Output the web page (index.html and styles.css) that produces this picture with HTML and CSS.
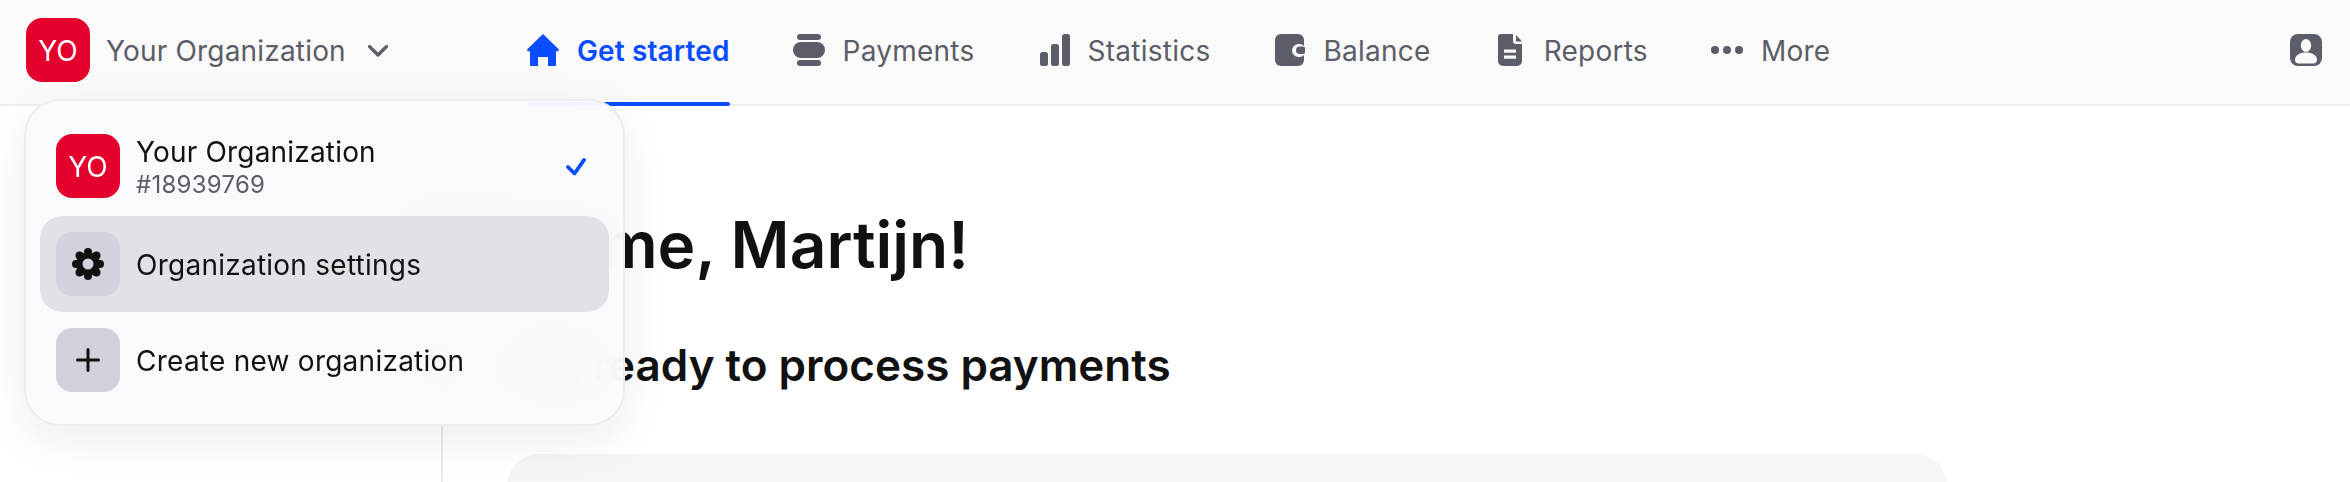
FILE: index.html
```html
<!DOCTYPE html>
<html lang="en">
<head>
<meta charset="utf-8">
<title>Get started</title>
<link rel="stylesheet" href="styles.css">
</head>
<body>
<header class="topbar">
  <div class="org">
    <span class="logo">YO</span>
    <span class="org-name">Your Organization</span>
    <svg class="chevron" width="20" height="12" viewBox="0 0 20 12"><path d="M1.6 1.6 10 10 18.4 1.6" fill="none" stroke="#5b5d68" stroke-width="3.4" stroke-linecap="round" stroke-linejoin="round"/></svg>
  </div>
  <nav class="nav">
    <a class="nav-item active">
      <svg class="icon" viewBox="0 0 32 32"><path fill-rule="evenodd" fill="#0a4cff" d="M16 0 31.4 15c.9.9.3 2.3-.9 2.3H29V31a1 1 0 0 1-1 1H21V23h-10v9H4a1 1 0 0 1-1-1V17.3H1.500c-1.200 0-1.800-1.400-.9-2.300Z"/></svg>
      <span class="label">Get started</span>
    </a>
    <a class="nav-item">
      <svg class="icon" viewBox="0 0 32 32" fill="#5b5d68"><rect x="4" y="0" width="24" height="6" rx="3"/><rect x="0" y="8" width="32" height="16" rx="8"/><rect x="4" y="26" width="24" height="6" rx="3"/></svg>
      <span class="label">Payments</span>
    </a>
    <a class="nav-item">
      <svg class="icon" viewBox="0 0 32 32" fill="#5b5d68"><rect x="2" y="18" width="8" height="14" rx="2.500"/><rect x="13" y="10" width="8" height="22" rx="2.500"/><rect x="24" y="0" width="8" height="32" rx="2.500"/></svg>
      <span class="label">Statistics</span>
    </a>
    <a class="nav-item">
      <svg class="icon" viewBox="0 0 32 32"><rect x="2" y="0" width="29" height="32" rx="6" fill="#5b5d68"/><rect x="19" y="10" width="14" height="13" rx="6.500" fill="#fafafa"/><rect x="23" y="12.500" width="10" height="7.500" rx="3.750" fill="#5b5d68"/></svg>
      <span class="label">Balance</span>
    </a>
    <a class="nav-item">
      <svg class="icon" viewBox="0 0 32 32"><path fill="#5b5d68" d="M7 0H19V7a3 3 0 0 0 3 3H28V27a5 5 0 0 1-5 5H9a5 5 0 0 1-5-5V3a3 3 0 0 1 3-3Z"/><path fill="#5b5d68" d="M22 1 28 7.500H22Z"/><rect x="10" y="15.500" width="12" height="3.200" fill="#fafafa"/><rect x="10" y="21.500" width="12" height="3.200" fill="#fafafa"/></svg>
      <span class="label">Reports</span>
    </a>
    <a class="nav-item">
      <svg class="icon" viewBox="0 0 32 32" fill="#5b5d68"><circle cx="4" cy="16" r="4"/><circle cx="16" cy="16" r="4"/><circle cx="28" cy="16" r="4"/></svg>
      <span class="label">More</span>
    </a>
  </nav>
  <svg class="profile" width="32" height="32" viewBox="0 0 32 32"><rect width="32" height="32" rx="8" fill="#5b5d68"/><ellipse cx="16" cy="11.500" rx="5.200" ry="6.500" fill="#fafafa"/><path fill="#fafafa" d="M5 26c0-5 5-7.500 11-7.500S27 21 27 26c0 2-1.500 3.500-3.500 3.500h-15C6.500 29.500 5 28 5 26Z"/></svg>
</header>

<div class="layout">
  <aside class="sidebar"><span class="side-mark"></span></aside>
  <main class="content">
    <h1 class="title">Welcome, Martijn!</h1>
    <h2 class="subtitle">Get ready to process payments</h2>
    <section class="card"></section>
  </main>
</div>

<div class="menu">
  <div class="row current">
    <span class="logo">YO</span>
    <span class="row-text">
      <span class="row-name">Your Organization</span>
      <span class="row-id">#18939769</span>
    </span>
    <svg class="check" width="20" height="18" viewBox="0 0 20 18"><path d="M2 9 8.500 15.500 18 2" fill="none" stroke="#0a4cff" stroke-width="3.800" stroke-linecap="round" stroke-linejoin="round"/></svg>
  </div>
  <div class="row hover">
    <span class="tile">
      <svg width="32" height="32" viewBox="0 0 32 32"><g fill="#111"><circle cx="16" cy="4" r="4"/><circle cx="16" cy="28" r="4"/><circle cx="4" cy="16" r="4"/><circle cx="28" cy="16" r="4"/><circle cx="7.500" cy="7.500" r="4"/><circle cx="24.500" cy="7.500" r="4"/><circle cx="7.500" cy="24.500" r="4"/><circle cx="24.500" cy="24.500" r="4"/><circle cx="16" cy="16" r="12"/></g><circle cx="16" cy="16" r="5.500" fill="#d1d2dc"/></svg>
    </span>
    <span class="row-name">Organization settings</span>
  </div>
  <div class="row">
    <span class="tile">
      <svg width="24" height="24" viewBox="0 0 24 24"><path d="M12 1.500V22.500M1.500 12H22.500" fill="none" stroke="#111" stroke-width="3" stroke-linecap="round"/></svg>
    </span>
    <span class="row-name">Create new organization</span>
  </div>
</div>
</body>
</html>
```
FILE: styles.css
```css
* { box-sizing: border-box; }

html, body { height: 100%; }

body {
  margin: 0;
  overflow: hidden;
  background: #fff;
  color: #111;
  font-family: Inter, "Liberation Sans", sans-serif;
  font-size: 28px;
  letter-spacing: 0.25px;
}

.topbar {
  display: flex;
  align-items: stretch;
  height: 106px;
  padding: 0 28px 0 26px;
  background: #fafafa;
  border-bottom: 2px solid #ededf2;
}

.org {
  display: flex;
  align-items: center;
  width: 501px;
  height: 100px;
}

.logo {
  display: flex;
  flex: none;
  align-items: center;
  justify-content: center;
  width: 64px;
  height: 64px;
  padding-top: 2px;
  border-radius: 16px;
  background: #e4002c;
  color: #fff;
  font-size: 28px;
  letter-spacing: 0;
}

.org-name {
  margin-left: 16px;
  margin-top: 2px;
  color: #5b5d68;
  letter-spacing: 0.18px;
}

.chevron { margin-left: 22px; margin-top: 1px; }

.nav {
  display: flex;
  gap: 63px;
  flex: 1;
}

.nav-item {
  position: relative;
  display: flex;
  align-items: center;
  gap: 18px;
  height: 100px;
  color: #5b5d68;
}

.nav-item .icon { width: 32px; height: 32px; flex: none; }

.label { margin-top: 2px; }

.nav-item.active {
  color: #0a4cff;
  font-weight: 600;
  letter-spacing: 0.12px;
}

.nav-item.active::after {
  content: "";
  position: absolute;
  left: 0;
  right: 0;
  top: 102px;
  height: 4px;
  border-radius: 2px;
  background: #0a4cff;
}

.profile { align-self: flex-start; margin-top: 34px; }

.layout {
  display: flex;
  height: 376px;
  overflow: hidden;
}

.sidebar {
  display: flex;
  flex-direction: column;
  align-items: flex-end;
  width: 443px;
  padding-top: 246px;
  border-right: 2px solid #e8e8ec;
}

.side-mark {
  width: 32px;
  height: 28px;
  margin-right: -10px;
  border-radius: 50%;
  background: #0a4cff;
}

.content {
  flex: none;
  width: 1440px;
  margin-left: 64px;
  letter-spacing: 0;
}

.title {
  margin: 101px 0 0 -100px;
  font-size: 64px;
  line-height: 76px;
  font-weight: 600;
}

.subtitle {
  margin: 56px 0 0;
  font-size: 44px;
  line-height: 52px;
  font-weight: 600;
}

.card {
  height: 120px;
  margin-top: 63px;
  border-radius: 32px 32px 0 0;
  background: #f4f5f7;
}

.menu {
  position: absolute;
  left: 24px;
  top: 99px;
  display: flex;
  flex-direction: column;
  width: 601px;
  height: 327px;
  padding: 17px 14px 16px;
  border: 2px solid #ecedf1;
  border-radius: 36px;
  background: rgba(249, 250, 252, 0.95);
  -webkit-backdrop-filter: blur(32px);
  backdrop-filter: blur(32px);
  box-shadow: 0 14px 44px rgba(20, 20, 40, 0.08);
}

.row {
  display: flex;
  flex: none;
  align-items: center;
  height: 96px;
  padding: 0 16px;
  border-radius: 22px;
}

.row.current { margin-bottom: 2px; }

.row.hover { background: #e1e2e8; }

.tile {
  display: flex;
  flex: none;
  align-items: center;
  justify-content: center;
  width: 64px;
  height: 64px;
  border-radius: 16px;
  background: #d1d2dc;
}

.row-text {
  display: flex;
  flex-direction: column;
  padding-top: 2px;
}

.row-text .row-name { letter-spacing: 0.18px; }

.row-name {
  margin-left: 16px;
  line-height: 36px;
  color: #111;
}

.row > .row-name { margin-top: 2px; }

.row-id {
  margin-left: 16px;
  font-size: 24px;
  line-height: 30px;
  color: #5b5d68;
}

.check { margin-left: auto; margin-right: 7px; margin-top: 2px; }
```
